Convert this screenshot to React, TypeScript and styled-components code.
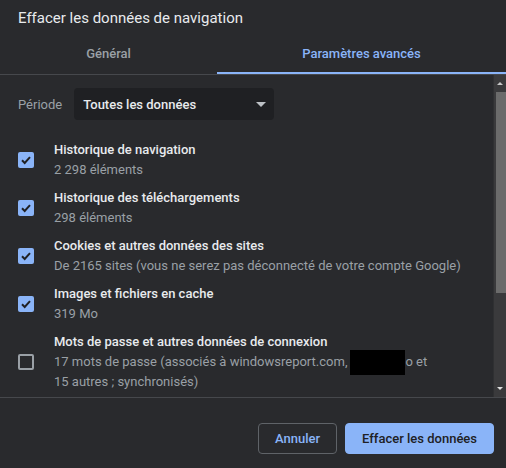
import styled, { createGlobalStyle } from 'styled-components';

const GlobalStyle = createGlobalStyle`
    html, body {
        margin: 0;
        padding: 0;
        background: #292a2d;
    }
    * {
        box-sizing: border-box;
    }
`;

const Dialog = styled.div`
    width: 506px;
    height: 468px;
    background: #292a2d;
    font-family: Roboto, 'Liberation Sans', sans-serif;
    color: #e8eaed;
    display: flex;
    flex-direction: column;
    overflow: hidden;
`;

const Title = styled.div`
    padding: 8px 18px 0;
    font-size: 15px;
    line-height: 20px;
    color: #e8eaed;
`;

const TabBar = styled.div`
    display: flex;
    border-bottom: 1px solid #46484c;
`;

const Tab = styled.div<{ active?: boolean; grow: number }>`
    flex: ${({ grow }) => grow};
    height: 46px;
    padding-top: 6px;
    display: flex;
    align-items: center;
    justify-content: center;
    font-size: 13px;
    font-weight: 500;
    color: ${({ active }) => (active ? '#8ab4f8' : '#9aa0a6')};
    border-bottom: 2px solid ${({ active }) => (active ? '#8ab4f8' : 'transparent')};
`;

const ScrollArea = styled.div`
    display: flex;
    height: 322px;
`;

const Content = styled.div`
    flex: 1;
    padding: 13px 0 0 18px;
`;

const PeriodRow = styled.div`
    display: flex;
    align-items: center;
    gap: 12px;
    margin-bottom: 16px;
`;

const Label = styled.span`
    font-size: 13px;
    color: #9aa0a6;
`;

const Select = styled.div`
    width: 200px;
    height: 32px;
    border-radius: 4px;
    background: #1f2023;
    display: flex;
    align-items: center;
    justify-content: space-between;
    padding: 0 8px 0 9px;
    font-size: 13px;
    font-weight: 500;
    color: #e8eaed;
`;

const Caret = styled.span`
    width: 0;
    height: 0;
    border-left: 5px solid transparent;
    border-right: 5px solid transparent;
    border-top: 5px solid #bdc1c6;
`;

const Row = styled.div`
    display: flex;
    align-items: center;
    padding: 4px 0;
`;

const Box = styled.div<{ checked: boolean }>`
    width: 16px;
    height: 16px;
    flex-shrink: 0;
    margin-right: 20px;
    border-radius: 2px;
    background: ${({ checked }) => (checked ? '#8ab4f8' : 'transparent')};
    border: ${({ checked }) => (checked ? 'none' : '2px solid #9aa0a6')};
    display: flex;
    align-items: center;
    justify-content: center;
`;

const Texts = styled.div`
    display: flex;
    flex-direction: column;
`;

const ItemTitle = styled.div`
    font-size: 13px;
    line-height: 20px;
    font-weight: 500;
    color: #e8eaed;
`;

const ItemSub = styled.div`
    font-size: 13px;
    line-height: 20px;
    color: #9aa0a6;
`;

const Redacted = styled.span`
    display: inline-block;
    width: 55px;
    height: 25px;
    margin: -4px 0 -4px 3px;
    background: #000;
    vertical-align: middle;
`;

const Scrollbar = styled.div`
    width: 13px;
    background: #3a3a3c;
    border-left: 1px solid #2f3032;
    display: flex;
    flex-direction: column;
    align-items: center;
`;

const Arrow = styled.div<{ up?: boolean }>`
    height: 17px;
    display: flex;
    align-items: center;
    justify-content: center;
    &::after {
        content: '';
        border-left: 3px solid transparent;
        border-right: 3px solid transparent;
        ${({ up }) => (up ? 'border-bottom: 3px solid #c8c8c8;' : 'border-top: 3px solid #e0e0e0;')}
    }
`;

const Thumb = styled.div`
    width: 10px;
    margin-left: 1px;
    height: 201px;
    background: #6b6b6b;
`;

const Track = styled.div`
    flex: 1;
`;

const Footer = styled.div`
    flex: 1;
    border-top: 1px solid #46484c;
    display: flex;
    justify-content: flex-end;
    align-items: flex-start;
    gap: 8px;
    padding: 25px 12px 0 0;
`;

const Button = styled.button<{ primary?: boolean }>`
    height: 31px;
    padding: 0 16px;
    border-radius: 4px;
    font-family: Roboto, 'Liberation Sans', sans-serif;
    font-size: 13px;
    font-weight: 500;
    border: 1px solid ${({ primary }) => (primary ? '#8ab4f8' : '#5f6368')};
    background: ${({ primary }) => (primary ? '#8ab4f8' : 'transparent')};
    color: ${({ primary }) => (primary ? '#202124' : '#8ab4f8')};
`;

const Check = () => (
    <svg width="12" height="12" viewBox="0 0 12 12">
        <path d="M2 6.3 L4.7 9 L10 3.2" fill="none" stroke="#202124" strokeWidth="2" />
    </svg>
);

const items: { title: string; sub: React.ReactNode; checked: boolean }[] = [
    { title: 'Historique de navigation', sub: '2 298 éléments', checked: true },
    { title: 'Historique des téléchargements', sub: '298 éléments', checked: true },
    {
        title: 'Cookies et autres données des sites',
        sub: 'De 2165 sites (vous ne serez pas déconnecté de votre compte Google)',
        checked: true,
    },
    { title: 'Images et fichiers en cache', sub: '319 Mo', checked: true },
    {
        title: 'Mots de passe et autres données de connexion',
        sub: (
            <>
                17 mots de passe (associés à windowsreport.com,
                <Redacted />o et
                <br />
                15 autres ; synchronisés)
            </>
        ),
        checked: false,
    },
];

export default function App() {
    return (
        <>
            <GlobalStyle />
            <Dialog>
                <Title>Effacer les données de navigation</Title>
                <TabBar>
                    <Tab grow={217}>Général</Tab>
                    <Tab grow={289} active>
                        Paramètres avancés
                    </Tab>
                </TabBar>
                <ScrollArea>
                    <Content>
                        <PeriodRow>
                            <Label>Période</Label>
                            <Select>
                                Toutes les données
                                <Caret />
                            </Select>
                        </PeriodRow>
                        {items.map((it, i) => (
                            <Row key={i}>
                                <Box checked={it.checked}>{it.checked && <Check />}</Box>
                                <Texts>
                                    <ItemTitle>{it.title}</ItemTitle>
                                    <ItemSub>{it.sub}</ItemSub>
                                </Texts>
                            </Row>
                        ))}
                    </Content>
                    <Scrollbar>
                        <Arrow up />
                        <Thumb />
                        <Track />
                        <Arrow />
                    </Scrollbar>
                </ScrollArea>
                <Footer>
                    <Button>Annuler</Button>
                    <Button primary>Effacer les données</Button>
                </Footer>
            </Dialog>
        </>
    );
}
